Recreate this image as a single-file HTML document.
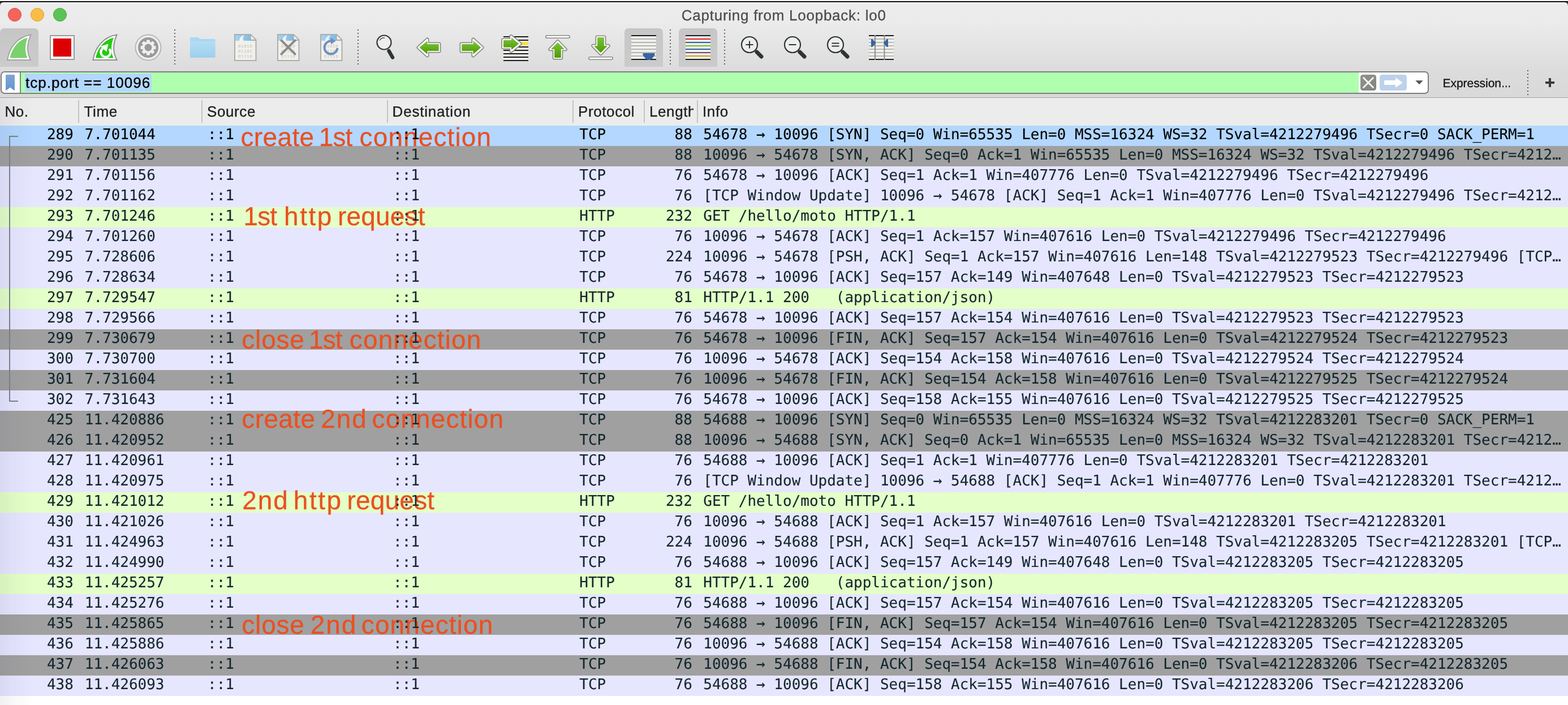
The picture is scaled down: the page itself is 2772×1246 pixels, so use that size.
<!DOCTYPE html>
<html lang="en">
<head>
<meta charset="utf-8">
<title>Capturing from Loopback: lo0</title>
<style>
html,body{margin:0;padding:0;}
body{text-rendering:geometricPrecision;width:2772px;height:1246px;overflow:hidden;background:#fff;position:relative;font-family:"Liberation Sans",sans-serif;}
.abs{position:absolute;}
.win{will-change:transform;position:absolute;left:0;top:0;width:2772px;height:172px;background:#f1f2f4;}
.blk{position:absolute;left:0;top:2px;width:2772px;height:2px;background:#0a0a0c;}
.corner{position:absolute;top:4px;width:8px;height:8px;background:#4a4a4c;}
.chrome{position:absolute;left:0;top:4px;width:2772px;height:168px;border-radius:7px 7px 0 0;background:linear-gradient(#ececec 0,#ebebeb 22%,#dcdcdc 72%,#d9d9d9 100%);box-shadow:inset 0 1px 0 #fff;}
.tl{position:absolute;top:14px;width:24px;height:24px;border-radius:50%;box-sizing:border-box;}
.title{position:absolute;left:1204.8px;top:11px;font-size:26px;line-height:32px;color:#4b4b4b;white-space:pre;letter-spacing:.74px;-webkit-text-stroke:.3px #4b4b4b;}
.tbsel{position:absolute;top:50px;width:68px;height:68px;background:linear-gradient(#c6c6c6,#cbcbcb);border-radius:7px 7px 0 0;}
.sep{position:absolute;top:52px;width:2px;height:62px;background:repeating-linear-gradient(#5c5c5c 0,#5c5c5c 2px,transparent 2px,transparent 6px);}
.ic{position:absolute;overflow:visible;}
.fbar{will-change:transform;position:absolute;left:0;top:126px;width:2772px;height:46px;}
.fbox{position:absolute;left:1px;top:0;width:2525px;height:40px;box-sizing:border-box;border:2px solid #7e7e7e;border-radius:7px;background:#fff;overflow:hidden;}
.fgreen{position:absolute;left:32px;top:0;width:2365px;height:36px;background:#afffaf;border-left:2px solid #7f8a7f;}
.fselx{position:absolute;left:41px;top:2px;width:224px;height:32px;background:#b3d7ff;}
.ftext{position:absolute;left:42px;top:3px;font-size:26px;line-height:31px;color:#000;white-space:pre;letter-spacing:1.02px;-webkit-text-stroke:.35px #000;}
.hline{position:absolute;left:0;top:172px;width:2772px;height:1px;background:#a0a0a0;}
.head{will-change:transform;position:absolute;left:0;top:173px;width:2772px;height:49px;background:#ececec;}
.head span{position:absolute;top:8px;font-size:26px;line-height:32px;color:#1e1e1e;white-space:pre;letter-spacing:.6px;-webkit-text-stroke:.35px #1e1e1e;}
.head i{position:absolute;top:4px;width:2px;height:40px;background:#c4c4c4;}
.list{will-change:transform;position:absolute;left:0;top:222px;width:2772px;height:1010px;font-family:"DejaVu Sans Mono","Liberation Mono",monospace;font-size:26px;letter-spacing:-.019px;color:#12272e;}
.row{position:relative;height:36px;width:2772px;overflow:hidden;}
.row.sel{background:#b3d7ff;color:#000;}
.row.syn{background:#a0a0a0;}
.row.tcp{background:#e7e6ff;}
.row.http{background:#e4ffc7;}
  .c{position:absolute;z-index:2;top:-2px;-webkit-text-stroke:.12px currentColor;line-height:36px;height:36px;white-space:pre;}
.no{left:0;width:129.8px;text-align:right;}
.tm{left:149.8px;}
.src{left:367px;}
.dst{left:695px;}
.pr{left:1024.3px;}
.ln{left:1139px;width:84.9px;text-align:right;}
.inf{left:1243.3px;}
.brk{z-index:2;position:absolute;left:16px;top:18px;width:14px;height:466px;border:2px solid #7b8288;border-right:none;}
.notes{position:absolute;left:0;top:-222px;width:0;height:0;z-index:1;}
.note{position:absolute;height:48px;font-family:"Liberation Sans",sans-serif;font-size:46px;line-height:1;color:rgb(234,80,32);-webkit-text-stroke:.25px rgb(234,80,32);white-space:pre;}
.note span{position:absolute;top:0;}
.lshade{position:absolute;left:0;top:173px;width:60px;height:1073px;background:linear-gradient(to right,rgba(60,60,90,.075),rgba(60,60,90,.03) 45%,rgba(60,60,90,0));pointer-events:none;}
</style>
</head>
<body>
<div class="win">
<div class="blk"></div>
<div class="corner" style="left:0"></div><div class="corner" style="right:0"></div>
<div class="chrome"></div>
<div class="tl" style="left:14px;background:#f4645a;border:1px solid #dd4a41;"></div>
<div class="tl" style="left:54px;background:#f8bd45;border:1px solid #dea032;"></div>
<div class="tl" style="left:94px;background:#5bc454;border:1px solid #41a83d;"></div>
<div class="title">Capturing from Loopback: lo0</div>
<div class="tbsel" style="left:0"></div>
<div class="tbsel" style="left:1104px"></div>
<div class="tbsel" style="left:1200px"></div>
<div class="sep" style="left:308px"></div>
<div class="sep" style="left:632px"></div>
<div class="sep" style="left:1184px"></div>
<div class="sep" style="left:1280px"></div>
<svg class="ic" style="left:0;top:0" width="2772" height="127" viewBox="0 0 2772 127">
<defs>
<linearGradient id="gg" x1="0" y1="0" x2="0" y2="1"><stop offset="0" stop-color="#7cc43a"/><stop offset="1" stop-color="#4e9a06"/></linearGradient>
<linearGradient id="gb" x1="0" y1="0" x2="1" y2="0"><stop offset="0" stop-color="#a9d3ee"/><stop offset="1" stop-color="#6fb3e0"/></linearGradient>
<linearGradient id="gf" x1="0" y1="0" x2="0" y2="1"><stop offset="0" stop-color="#b5ddf5"/><stop offset="1" stop-color="#9dcfee"/></linearGradient>
</defs>
<!-- start capture (fin) -->
<path d="M13 106 C16.5 84 31 65 54.5 61.5 C48 76 46.5 91 54 106 Z" fill="#fff" stroke="#a2a2a2" stroke-width="2" stroke-linejoin="miter"/>
<path d="M17.5 102.5 C21 86 32 70.5 49 66.5 C44 79 43.5 91 48.5 102.5 Z" fill="#79d26c"/>
<!-- stop -->
<rect x="89" y="63" width="42" height="42" fill="#fff" stroke="#9a9a9a" stroke-width="2"/>
<rect x="94" y="68" width="32" height="32" fill="#dc0000"/>
<!-- restart -->
<path d="M164.500 106 C168 84 182.500 65 206.500 61.500 C200 76 198.500 91 206.500 106 Z" fill="#fff" stroke="#909090" stroke-width="2"/>
<path d="M169 102.500 C172.500 86 183.500 70.500 201 66.500 C196 79 195.500 91 200.500 102.500 Z" fill="#24cc12"/>
<path d="M185 84 A8.5 8.500 0 1 0 193 86.500" fill="none" stroke="#fff" stroke-width="4"/>
<path d="M177.500 82 L191.500 77.500 L188.500 91.500 Z" fill="#fff"/>
<!-- options gear -->
<circle cx="262" cy="84" r="22.5" fill="#efefef" stroke="#b6b6b6" stroke-width="2"/>
<circle cx="262" cy="84" r="18" fill="#9a9a9a"/>
<g fill="#efefef" transform="translate(262 84)">
<circle r="10.500"/>
<g id="tooth"><rect x="-3" y="-13.500" width="6" height="5" rx="1"/></g>
<use href="#tooth" transform="rotate(45)"/><use href="#tooth" transform="rotate(90)"/><use href="#tooth" transform="rotate(135)"/><use href="#tooth" transform="rotate(180)"/><use href="#tooth" transform="rotate(225)"/><use href="#tooth" transform="rotate(270)"/><use href="#tooth" transform="rotate(315)"/>
</g>
<circle cx="262" cy="84" r="6.500" fill="#9a9a9a"/>
<!-- folder -->
<path d="M336 68 q0 -2 2 -2 h12 q1.500 0 2 1.500 l0.500 1.500 h26 q2 0 2 2 v29 q0 2 -2 2 h-40.500 q-2 0 -2 -2 Z" fill="#a9d7f3"/>
<path d="M336 73 h44.500 v27 q0 2 -2 2 h-40.500 q-2 0 -2 -2 Z" fill="url(#gf)"/>
<!-- file icons -->
<g id="doc">
<path d="M415 61 h28 l9.500 9.500 v36.500 h-37.500 Z" fill="#f1f0ea" stroke="#adadad" stroke-width="2" stroke-linejoin="miter"/>
<path d="M416 62 h26.500 l9 9 v1 h-35.500 Z" fill="url(#gb)"/>
<path d="M423 72 C423 67 427 63 432 62 C429 66 429 69 430.500 72 Z" fill="#eef4f8"/>
<path d="M443 61 v9.500 h9.500 Z" fill="#f4f4f4" stroke="#adadad" stroke-width="1.500" stroke-linejoin="round"/>
<g font-family="'Liberation Mono','DejaVu Sans Mono',monospace" font-size="7.600" fill="#c3c3be" text-anchor="middle" letter-spacing="0.500">
<text x="433.700" y="83.800">01010</text><text x="433.700" y="92.900">01101</text><text x="433.700" y="102">01110</text>
</g>
</g>
<use href="#doc" transform="translate(76 0)"/>
<use href="#doc" transform="translate(152 0)"/>
<path d="M497.500 71.500 L521.500 95.500 M521.500 71.500 L497.500 95.500" stroke="#8a8a8a" stroke-width="4" stroke-linecap="round" fill="none"/>
<path d="M596.500 85 A11.500 11.500 0 1 1 586 72.500" fill="none" stroke="#6d8fc4" stroke-width="4"/>
<path d="M585 66.500 L593.500 72.500 L585 78.500 Z" fill="#6d8fc4"/>
<!-- find -->
<circle cx="679" cy="75" r="12.500" fill="#eeeeec" stroke="#2e3436" stroke-width="2.200"/>
<path d="M671.500 71 A8 8 0 0 1 680 67" fill="none" stroke="#2e3436" stroke-width="1.200" stroke-linecap="round"/>
<path d="M687.500 90 L694 101.500" stroke="#2e3436" stroke-width="6.500" stroke-linecap="round"/>
<!-- back / forward -->
<path d="M739.5 84.0 L755.5 69.5 L755.5 77.5 L776.5 77.5 L776.5 90.5 L755.5 90.5 L755.5 98.5 Z" fill="#888a85" stroke="#888a85" stroke-width="6" stroke-linejoin="round"/>
<path d="M739.5 84.0 L755.5 69.5 L755.5 77.5 L776.5 77.5 L776.5 90.5 L755.5 90.5 L755.5 98.5 Z" fill="#fff" stroke="#fff" stroke-width="2.600" stroke-linejoin="round"/>
<path d="M742.2 84.0 L755.0 73.0 L755.0 78.5 L775.2 78.5 L775.2 89.5 L755.0 89.5 L755.0 95.0 Z" fill="url(#gg)" stroke="url(#gg)" stroke-width="1" stroke-linejoin="round"/>
<path d="M852.5 84.0 L836.5 69.5 L836.5 77.5 L815.5 77.5 L815.5 90.5 L836.5 90.5 L836.5 98.5 Z" fill="#888a85" stroke="#888a85" stroke-width="6" stroke-linejoin="round"/>
<path d="M852.5 84.0 L836.5 69.5 L836.5 77.5 L815.5 77.5 L815.5 90.5 L836.5 90.5 L836.5 98.5 Z" fill="#fff" stroke="#fff" stroke-width="2.600" stroke-linejoin="round"/>
<path d="M849.8 84.0 L837.0 73.0 L837.0 78.5 L816.8 78.5 L816.8 89.5 L837.0 89.5 L837.0 95.0 Z" fill="url(#gg)" stroke="url(#gg)" stroke-width="1" stroke-linejoin="round"/>
<!-- goto -->
<g id="lines7" stroke="#1c1c1c" stroke-width="2">
<path d="M890 65 h44 M890 71 h44 M890 83 h44 M890 89 h44 M890 95 h44 M890 101 h44 M890 107 h44"/>
</g>
<rect x="890" y="66" width="44" height="41" fill="#f0f0ee"/>
<path d="M890 65 h44 M890 71 h44 M890 83 h44 M890 89 h44 M890 95 h44 M890 101 h44 M890 107 h44" stroke="#1c1c1c" stroke-width="2"/>
<rect x="910" y="74" width="24" height="6" fill="#fbe24a"/>
<path d="M889.2 70.4 L903.5 70.4 L903.5 64.0 L919.7 77.3 L903.5 90.6 L903.5 84.2 L889.2 84.2 Z" fill="#888a85" stroke="#888a85" stroke-width="6" stroke-linejoin="round"/>
<path d="M889.2 70.4 L903.5 70.4 L903.5 64.0 L919.7 77.3 L903.5 90.6 L903.5 84.2 L889.2 84.2 Z" fill="#fff" stroke="#fff" stroke-width="2.600" stroke-linejoin="round"/>
<path d="M890.5 71.5 L904.5 71.5 L904.5 67.5 L916.8 77.3 L904.5 87.1 L904.5 83.1 L890.5 83.1 Z" fill="url(#gg)" stroke="url(#gg)" stroke-width="1" stroke-linejoin="round"/>
<!-- first -->
<rect x="964.800" y="62.800" width="42.400" height="4.400" rx="2.200" fill="#fff" stroke="#888a85" stroke-width="1.600"/>
<path d="M986.0 73.0 L999.8 87.3 L992.3 87.3 L992.3 102.5 L979.7 102.5 L979.7 87.3 L972.2 87.3 Z" fill="#888a85" stroke="#888a85" stroke-width="6" stroke-linejoin="round"/>
<path d="M986.0 73.0 L999.8 87.3 L992.3 87.3 L992.3 102.5 L979.7 102.5 L979.7 87.3 L972.2 87.3 Z" fill="#fff" stroke="#fff" stroke-width="2.600" stroke-linejoin="round"/>
<path d="M986.0 75.5 L997.0 86.5 L991.3 86.5 L991.3 101.5 L980.7 101.5 L980.7 86.5 L975.0 86.5 Z" fill="url(#gg)" stroke="url(#gg)" stroke-width="1" stroke-linejoin="round"/>
<!-- last -->
<rect x="1040.800" y="100.800" width="42.400" height="4.400" rx="2.200" fill="#fff" stroke="#888a85" stroke-width="1.600"/>
<path d="M1062.0 95.2 L1075.8 80.8 L1068.4 80.8 L1068.4 65.4 L1055.5 65.4 L1055.5 80.8 L1048.2 80.8 Z" fill="#888a85" stroke="#888a85" stroke-width="6" stroke-linejoin="round"/>
<path d="M1062.0 95.2 L1075.8 80.8 L1068.4 80.8 L1068.4 65.4 L1055.5 65.4 L1055.5 80.8 L1048.2 80.8 Z" fill="#fff" stroke="#fff" stroke-width="2.600" stroke-linejoin="round"/>
<path d="M1062.0 92.8 L1073.0 81.6 L1067.4 81.6 L1067.4 66.4 L1056.5 66.4 L1056.5 81.6 L1051.0 81.6 Z" fill="url(#gg)" stroke="url(#gg)" stroke-width="1" stroke-linejoin="round"/>
<!-- autoscroll -->
<rect x="1116" y="62" width="44" height="44" fill="#f0f0ee"/>
<path d="M1116 69 h44 M1116 75 h44 M1116 81 h44 M1116 87 h44 M1116 93 h44 M1116 99 h44" stroke="#b4b5ae" stroke-width="2"/>
<path d="M1116 63 h44 M1116 105 h44" stroke="#1c1c1c" stroke-width="2"/>
<path d="M1136 96 Q1136 94 1139 94 L1155 94 Q1158 94 1158 96 Q1154 104 1148.500 106 L1145.500 106 Q1140 104 1136 96 Z" fill="#3465a4"/>
<!-- colorize -->
<rect x="1212" y="62" width="44" height="44" fill="#f0f0ee"/>
<path d="M1212 63 h44 M1212 105 h44" stroke="#1c1c1c" stroke-width="2"/>
<path d="M1212 69 h44" stroke="#d8232a" stroke-width="2"/>
<path d="M1212 75 h44" stroke="#2f5ea0" stroke-width="2"/>
<path d="M1212 81 h44" stroke="#6ec21d" stroke-width="2"/>
<path d="M1212 87 h44" stroke="#2f5ea0" stroke-width="2"/>
<path d="M1212 93 h44" stroke="#70467e" stroke-width="2"/>
<path d="M1212 99 h44" stroke="#c8a010" stroke-width="2"/>
<!-- zoom -->
<g id="zm">
<circle cx="1325" cy="79" r="14" fill="#eeeeec" stroke="#2e3436" stroke-width="2.200"/>
<path d="M1338 92 L1346 100" stroke="#2e3436" stroke-width="7" stroke-linecap="round"/>
</g>
<path d="M1318.500 79 h13 M1325 72.500 v13" stroke="#2e3436" stroke-width="2"/>
<use href="#zm" transform="translate(76 0)"/>
<path d="M1394.500 79 h13" stroke="#2e3436" stroke-width="2"/>
<use href="#zm" transform="translate(152 0)"/>
<path d="M1470.500 76.500 h13 M1470.500 81.500 h13" stroke="#2e3436" stroke-width="2"/>
<!-- resize columns -->
<rect x="1536" y="62" width="44" height="44" fill="#f0f0ee"/>
<path d="M1536 69 h44 M1536 75 h44 M1536 81 h44 M1536 87 h44 M1536 93 h44 M1536 99 h44" stroke="#b9bab4" stroke-width="2"/>
<path d="M1536 63 h44 M1536 105 h44" stroke="#1c1c1c" stroke-width="2"/>
<path d="M1547 62 v44 M1563.500 62 v44" stroke="#8e8e8c" stroke-width="2"/>
<path d="M1540 69 L1542 69 L1548 75 L1548 77 L1542 83 L1540 83 Z" fill="#3465a4"/>
<path d="M1570 69 L1568 69 L1562.500 75 L1562.500 77 L1568 83 L1570 83 Z" fill="#3465a4"/>
</svg>

</div>
<div class="fbar">
<div class="fbox">
<div class="fgreen"></div>
<div class="fselx"></div>
<div class="ftext">tcp.port == 10096</div>
<svg class="ic" style="left:-3px;top:-2px" width="2525" height="40" viewBox="0 0 2525 40">
<defs><linearGradient id="bm" x1="0" y1="0" x2="0" y2="1"><stop offset="0" stop-color="#7fa5d3"/><stop offset="1" stop-color="#6196cf"/></linearGradient>
<linearGradient id="xg" x1="0" y1="0" x2="1" y2="1"><stop offset="0" stop-color="#8f918d"/><stop offset="1" stop-color="#828580"/></linearGradient></defs>
<path d="M10 7.500 Q10 6 11.500 6 L24.500 6 Q26 6 26 7.500 L26 32.500 Q26 34.500 24.300 33.300 L18 28.600 L11.700 33.300 Q10 34.500 10 32.500 Z" fill="url(#bm)"/>
<rect x="2405" y="6" width="28" height="28" rx="4.500" fill="url(#xg)"/>
<path d="M2410.500 11.500 L2427.500 28.500 M2427.500 11.500 L2410.500 28.500" stroke="#fff" stroke-width="2.600" stroke-linecap="round"/>
<rect x="2439" y="6" width="48" height="28" rx="4.500" fill="#bcd2ea"/>
<path d="M2448.500 16 L2467 16 L2467 13 Q2467 11 2468.800 12.200 L2478.500 19 Q2479.800 20 2478.500 21 L2468.800 27.800 Q2467 29 2467 27 L2467 24 L2448.500 24 Q2447 24 2447 22.500 L2447 17.500 Q2447 16 2448.500 16 Z" fill="#fff"/>
<path d="M2502.300 16.300 L2515.700 16.300 L2509 23.200 Z" fill="#555"/>
</svg>
</div>
<div class="abs" style="left:2550.6px;top:10px;font-size:21px;line-height:24px;color:#111;white-space:pre;letter-spacing:-.06px;-webkit-text-stroke:.3px #111;">Expression<span style="display:inline-block;transform:scaleX(.83);transform-origin:0 50%;margin-left:.5px;">…</span></div>
<div class="sep" style="left:2700px;top:-2px;height:44px;"></div>
<div class="abs" style="left:2732px;top:18px;width:16px;height:4px;background:#3a3a3a;"></div>
<div class="abs" style="left:2738px;top:12px;width:4px;height:16px;background:#3a3a3a;"></div>
</div>
<div class="hline"></div>
<div class="head">
<span style="left:8.4px">No.</span><i style="left:138px"></i>
<span style="left:148.6px">Time</span><i style="left:356px"></i>
<span style="left:366px">Source</span><i style="left:684px"></i>
<span style="left:693.6px;letter-spacing:.8px">Destination</span><i style="left:1012px"></i>
<span style="left:1022px">Protocol</span><i style="left:1138px"></i>
<span style="left:1148px;width:78px;overflow:hidden;">Length</span><i style="left:1232px"></i>
<span style="left:1242px">Info</span>
</div>
<div class="list">
<div class="row sel"><span class="c no">289</span><span class="c tm">7.701044</span><span class="c src">::1</span><span class="c dst">::1</span><span class="c pr">TCP</span><span class="c ln">88</span><span class="c inf">54678 → 10096 [SYN] Seq=0 Win=65535 Len=0 MSS=16324 WS=32 TSval=4212279496 TSecr=0 SACK_PERM=1</span></div>
<div class="row syn"><span class="c no">290</span><span class="c tm">7.701135</span><span class="c src">::1</span><span class="c dst">::1</span><span class="c pr">TCP</span><span class="c ln">88</span><span class="c inf">10096 → 54678 [SYN, ACK] Seq=0 Ack=1 Win=65535 Len=0 MSS=16324 WS=32 TSval=4212279496 TSecr=4212…</span></div>
<div class="row tcp"><span class="c no">291</span><span class="c tm">7.701156</span><span class="c src">::1</span><span class="c dst">::1</span><span class="c pr">TCP</span><span class="c ln">76</span><span class="c inf">54678 → 10096 [ACK] Seq=1 Ack=1 Win=407776 Len=0 TSval=4212279496 TSecr=4212279496</span></div>
<div class="row tcp"><span class="c no">292</span><span class="c tm">7.701162</span><span class="c src">::1</span><span class="c dst">::1</span><span class="c pr">TCP</span><span class="c ln">76</span><span class="c inf">[TCP Window Update] 10096 → 54678 [ACK] Seq=1 Ack=1 Win=407776 Len=0 TSval=4212279496 TSecr=4212…</span></div>
<div class="row http"><span class="c no">293</span><span class="c tm">7.701246</span><span class="c src">::1</span><span class="c dst">::1</span><span class="c pr">HTTP</span><span class="c ln">232</span><span class="c inf">GET /hello/moto HTTP/1.1 </span></div>
<div class="row tcp"><span class="c no">294</span><span class="c tm">7.701260</span><span class="c src">::1</span><span class="c dst">::1</span><span class="c pr">TCP</span><span class="c ln">76</span><span class="c inf">10096 → 54678 [ACK] Seq=1 Ack=157 Win=407616 Len=0 TSval=4212279496 TSecr=4212279496</span></div>
<div class="row tcp"><span class="c no">295</span><span class="c tm">7.728606</span><span class="c src">::1</span><span class="c dst">::1</span><span class="c pr">TCP</span><span class="c ln">224</span><span class="c inf">10096 → 54678 [PSH, ACK] Seq=1 Ack=157 Win=407616 Len=148 TSval=4212279523 TSecr=4212279496 [TCP…</span></div>
<div class="row tcp"><span class="c no">296</span><span class="c tm">7.728634</span><span class="c src">::1</span><span class="c dst">::1</span><span class="c pr">TCP</span><span class="c ln">76</span><span class="c inf">54678 → 10096 [ACK] Seq=157 Ack=149 Win=407648 Len=0 TSval=4212279523 TSecr=4212279523</span></div>
<div class="row http"><span class="c no">297</span><span class="c tm">7.729547</span><span class="c src">::1</span><span class="c dst">::1</span><span class="c pr">HTTP</span><span class="c ln">81</span><span class="c inf">HTTP/1.1 200   (application/json)</span></div>
<div class="row tcp"><span class="c no">298</span><span class="c tm">7.729566</span><span class="c src">::1</span><span class="c dst">::1</span><span class="c pr">TCP</span><span class="c ln">76</span><span class="c inf">54678 → 10096 [ACK] Seq=157 Ack=154 Win=407616 Len=0 TSval=4212279523 TSecr=4212279523</span></div>
<div class="row syn"><span class="c no">299</span><span class="c tm">7.730679</span><span class="c src">::1</span><span class="c dst">::1</span><span class="c pr">TCP</span><span class="c ln">76</span><span class="c inf">54678 → 10096 [FIN, ACK] Seq=157 Ack=154 Win=407616 Len=0 TSval=4212279524 TSecr=4212279523</span></div>
<div class="row tcp"><span class="c no">300</span><span class="c tm">7.730700</span><span class="c src">::1</span><span class="c dst">::1</span><span class="c pr">TCP</span><span class="c ln">76</span><span class="c inf">10096 → 54678 [ACK] Seq=154 Ack=158 Win=407616 Len=0 TSval=4212279524 TSecr=4212279524</span></div>
<div class="row syn"><span class="c no">301</span><span class="c tm">7.731604</span><span class="c src">::1</span><span class="c dst">::1</span><span class="c pr">TCP</span><span class="c ln">76</span><span class="c inf">10096 → 54678 [FIN, ACK] Seq=154 Ack=158 Win=407616 Len=0 TSval=4212279525 TSecr=4212279524</span></div>
<div class="row tcp"><span class="c no">302</span><span class="c tm">7.731643</span><span class="c src">::1</span><span class="c dst">::1</span><span class="c pr">TCP</span><span class="c ln">76</span><span class="c inf">54678 → 10096 [ACK] Seq=158 Ack=155 Win=407616 Len=0 TSval=4212279525 TSecr=4212279525</span></div>
<div class="row syn"><span class="c no">425</span><span class="c tm">11.420886</span><span class="c src">::1</span><span class="c dst">::1</span><span class="c pr">TCP</span><span class="c ln">88</span><span class="c inf">54688 → 10096 [SYN] Seq=0 Win=65535 Len=0 MSS=16324 WS=32 TSval=4212283201 TSecr=0 SACK_PERM=1</span></div>
<div class="row syn"><span class="c no">426</span><span class="c tm">11.420952</span><span class="c src">::1</span><span class="c dst">::1</span><span class="c pr">TCP</span><span class="c ln">88</span><span class="c inf">10096 → 54688 [SYN, ACK] Seq=0 Ack=1 Win=65535 Len=0 MSS=16324 WS=32 TSval=4212283201 TSecr=4212…</span></div>
<div class="row tcp"><span class="c no">427</span><span class="c tm">11.420961</span><span class="c src">::1</span><span class="c dst">::1</span><span class="c pr">TCP</span><span class="c ln">76</span><span class="c inf">54688 → 10096 [ACK] Seq=1 Ack=1 Win=407776 Len=0 TSval=4212283201 TSecr=4212283201</span></div>
<div class="row tcp"><span class="c no">428</span><span class="c tm">11.420975</span><span class="c src">::1</span><span class="c dst">::1</span><span class="c pr">TCP</span><span class="c ln">76</span><span class="c inf">[TCP Window Update] 10096 → 54688 [ACK] Seq=1 Ack=1 Win=407776 Len=0 TSval=4212283201 TSecr=4212…</span></div>
<div class="row http"><span class="c no">429</span><span class="c tm">11.421012</span><span class="c src">::1</span><span class="c dst">::1</span><span class="c pr">HTTP</span><span class="c ln">232</span><span class="c inf">GET /hello/moto HTTP/1.1 </span></div>
<div class="row tcp"><span class="c no">430</span><span class="c tm">11.421026</span><span class="c src">::1</span><span class="c dst">::1</span><span class="c pr">TCP</span><span class="c ln">76</span><span class="c inf">10096 → 54688 [ACK] Seq=1 Ack=157 Win=407616 Len=0 TSval=4212283201 TSecr=4212283201</span></div>
<div class="row tcp"><span class="c no">431</span><span class="c tm">11.424963</span><span class="c src">::1</span><span class="c dst">::1</span><span class="c pr">TCP</span><span class="c ln">224</span><span class="c inf">10096 → 54688 [PSH, ACK] Seq=1 Ack=157 Win=407616 Len=148 TSval=4212283205 TSecr=4212283201 [TCP…</span></div>
<div class="row tcp"><span class="c no">432</span><span class="c tm">11.424990</span><span class="c src">::1</span><span class="c dst">::1</span><span class="c pr">TCP</span><span class="c ln">76</span><span class="c inf">54688 → 10096 [ACK] Seq=157 Ack=149 Win=407648 Len=0 TSval=4212283205 TSecr=4212283205</span></div>
<div class="row http"><span class="c no">433</span><span class="c tm">11.425257</span><span class="c src">::1</span><span class="c dst">::1</span><span class="c pr">HTTP</span><span class="c ln">81</span><span class="c inf">HTTP/1.1 200   (application/json)</span></div>
<div class="row tcp"><span class="c no">434</span><span class="c tm">11.425276</span><span class="c src">::1</span><span class="c dst">::1</span><span class="c pr">TCP</span><span class="c ln">76</span><span class="c inf">54688 → 10096 [ACK] Seq=157 Ack=154 Win=407616 Len=0 TSval=4212283205 TSecr=4212283205</span></div>
<div class="row syn"><span class="c no">435</span><span class="c tm">11.425865</span><span class="c src">::1</span><span class="c dst">::1</span><span class="c pr">TCP</span><span class="c ln">76</span><span class="c inf">54688 → 10096 [FIN, ACK] Seq=157 Ack=154 Win=407616 Len=0 TSval=4212283205 TSecr=4212283205</span></div>
<div class="row tcp"><span class="c no">436</span><span class="c tm">11.425886</span><span class="c src">::1</span><span class="c dst">::1</span><span class="c pr">TCP</span><span class="c ln">76</span><span class="c inf">10096 → 54688 [ACK] Seq=154 Ack=158 Win=407616 Len=0 TSval=4212283205 TSecr=4212283205</span></div>
<div class="row syn"><span class="c no">437</span><span class="c tm">11.426063</span><span class="c src">::1</span><span class="c dst">::1</span><span class="c pr">TCP</span><span class="c ln">76</span><span class="c inf">10096 → 54688 [FIN, ACK] Seq=154 Ack=158 Win=407616 Len=0 TSval=4212283206 TSecr=4212283205</span></div>
<div class="row tcp"><span class="c no">438</span><span class="c tm">11.426093</span><span class="c src">::1</span><span class="c dst">::1</span><span class="c pr">TCP</span><span class="c ln">76</span><span class="c inf">54688 → 10096 [ACK] Seq=158 Ack=155 Win=407616 Len=0 TSval=4212283206 TSecr=4212283206</span></div>
<div class="brk"></div>
<div class="notes">
<div class="note" style="left:425.45px;top:218.91px;"><span style="left:0.00px;letter-spacing:0.38px;">create </span><span style="left:138.37px;letter-spacing:-0.92px;">1st </span><span style="left:210.15px;letter-spacing:1.11px;">connection</span></div>
<div class="note" style="left:430.62px;top:358.75px;"><span style="left:0.00px;letter-spacing:-0.92px;">1st </span><span style="left:71.48px;letter-spacing:2.48px;">http </span><span style="left:166.29px;letter-spacing:0.20px;">request</span></div>
<div class="note" style="left:427.30px;top:576.61px;"><span style="left:0.00px;letter-spacing:0.81px;">close </span><span style="left:118.82px;letter-spacing:-0.92px;">1st </span><span style="left:190.55px;letter-spacing:1.11px;">connection</span></div>
<div class="note" style="left:427.30px;top:716.91px;"><span style="left:0.00px;letter-spacing:0.38px;">create </span><span style="left:139.95px;letter-spacing:1.91px;">2nd </span><span style="left:230.30px;letter-spacing:1.11px;">connection</span></div>
<div class="note" style="left:428.15px;top:861.00px;"><span style="left:0.00px;letter-spacing:1.91px;">2nd </span><span style="left:90.69px;letter-spacing:2.48px;">http </span><span style="left:185.36px;letter-spacing:0.20px;">request</span></div>
<div class="note" style="left:427.30px;top:1080.81px;"><span style="left:0.00px;letter-spacing:0.81px;">close </span><span style="left:121.35px;letter-spacing:1.91px;">2nd </span><span style="left:211.50px;letter-spacing:1.11px;">connection</span></div>
</div>
</div>
<div class="lshade"></div>
</body>
</html>
